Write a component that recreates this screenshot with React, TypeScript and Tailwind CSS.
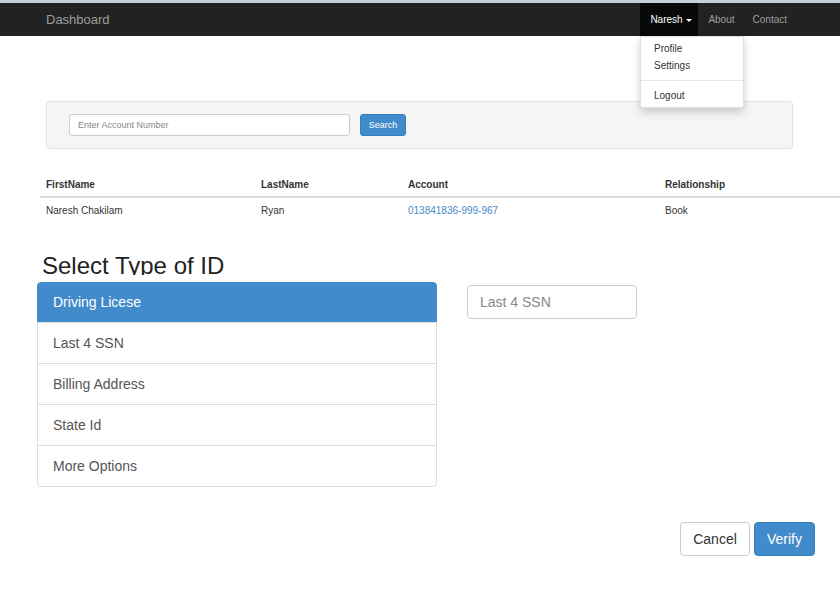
import React from "react";

const idTypes = ["Driving Licese", "Last 4 SSN", "Billing Address", "State Id", "More Options"];

function Navbar() {
  return (
    <div className="relative">
      <div className="h-[3px] bg-[#c3d1df]" />
      <div className="flex h-[33px] items-center bg-[#222222]">
        <div className="pl-[46px] text-[13px] text-[#9d9d9d]">Dashboard</div>
        <div className="ml-auto mr-[44px] flex h-full text-[10px] text-[#9d9d9d]">
          <div className="flex h-full w-[58px] items-center bg-[#080808] pl-[10px] text-white">
            Naresh
            <span className="ml-[3px] mt-[1px] border-x-[3px] border-t-[3px] border-x-transparent border-t-white" />
          </div>
          <div className="flex h-full items-center pl-[10px] pr-[9px]">About</div>
          <div className="flex h-full items-center px-[9px]">Contact</div>
        </div>
      </div>
      {/* user dropdown */}
      <div className="absolute left-[640px] top-[36px] z-10 w-[104px] rounded-b-[3px] border border-[#e0e0e0] bg-white pt-[3px] pb-[3px] text-[10px] text-[#333] shadow-[0_4px_8px_rgba(0,0,0,0.18)]">
        <div className="flex h-[17px] items-center px-[13px]">Profile</div>
        <div className="flex h-[17px] items-center px-[13px]">Settings</div>
        <div className="my-[6px] h-px bg-[#e5e5e5]" />
        <div className="flex h-[17px] items-center px-[13px]">Logout</div>
      </div>
    </div>
  );
}

function App() {
  return (
    <div className="min-h-[602px] w-[840px] bg-white text-[#333]" style={{ fontFamily: '"Liberation Sans", Arial, sans-serif' }}>
      <Navbar />

      <div className="ml-[46px] mt-[65px] flex h-[48px] w-[747px] items-center rounded-[3px] border border-[#e3e3e3] bg-[#f5f5f5] pl-[22px]">
        <input
          type="text"
          placeholder="Enter Account Number"
          className="h-[22px] w-[281px] rounded-[3px] border border-[#ccc] bg-white px-[8px] text-[9px] text-[#555] outline-none placeholder:text-[#888]"
        />
        <button className="ml-[10px] flex h-[22px] w-[46px] items-center justify-center rounded-[3px] border border-[#357ebd] bg-[#428bca] pt-px text-[9px] text-white">
          Search
        </button>
      </div>

      <table className="ml-[40px] mt-[23px] w-[800px] border-collapse text-left text-[10px]">
        <thead>
          <tr className="h-[25px] border-b-2 border-[#ddd]">
            <th className="w-[215px] px-[6px] font-bold">FirstName</th>
            <th className="w-[147px] px-[6px] font-bold">LastName</th>
            <th className="w-[257px] px-[6px] font-bold">Account</th>
            <th className="px-[6px] font-bold">Relationship</th>
          </tr>
        </thead>
        <tbody>
          <tr className="h-[26px]">
            <td className="px-[6px]">Naresh Chakilam</td>
            <td className="px-[6px]">Ryan</td>
            <td className="px-[6px] text-[#428bca]">013841836-999-967</td>
            <td className="px-[6px]">Book</td>
          </tr>
        </tbody>
      </table>

      <div className="ml-[42px] mt-[31px] h-[21px] overflow-hidden text-[24px] leading-[24px] text-[#222]">
        Select Type of ID
      </div>

      <div className="mt-[7px] flex items-start">
        <div className="ml-[37px] w-[400px] text-[14px]">
          {idTypes.map((t, i) => (
            <div
              key={t}
              className={
                i === 0
                  ? "flex h-[41px] items-center rounded-t-[4px] border border-[#428bca] bg-[#428bca] px-[15px] text-white"
                  : "-mt-px flex h-[42px] items-center border border-[#ddd] bg-white px-[15px] text-[#555] last:rounded-b-[4px]"
              }
            >
              {t}
            </div>
          ))}
        </div>
        <input
          type="text"
          placeholder="Last 4 SSN"
          className="ml-[30px] mt-[3px] h-[34px] w-[170px] rounded-[4px] border border-[#ccc] px-[12px] text-[14px] outline-none placeholder:text-[#888]"
        />
      </div>

      <div className="mr-[25px] mt-[35px] flex justify-end gap-[4px] text-[14px]">
        <button className="h-[34px] w-[70px] rounded-[4px] border border-[#ccc] bg-white text-[#333]">Cancel</button>
        <button className="h-[34px] w-[61px] rounded-[4px] border border-[#357ebd] bg-[#428bca] text-white">Verify</button>
      </div>
    </div>
  );
}

export default App;
